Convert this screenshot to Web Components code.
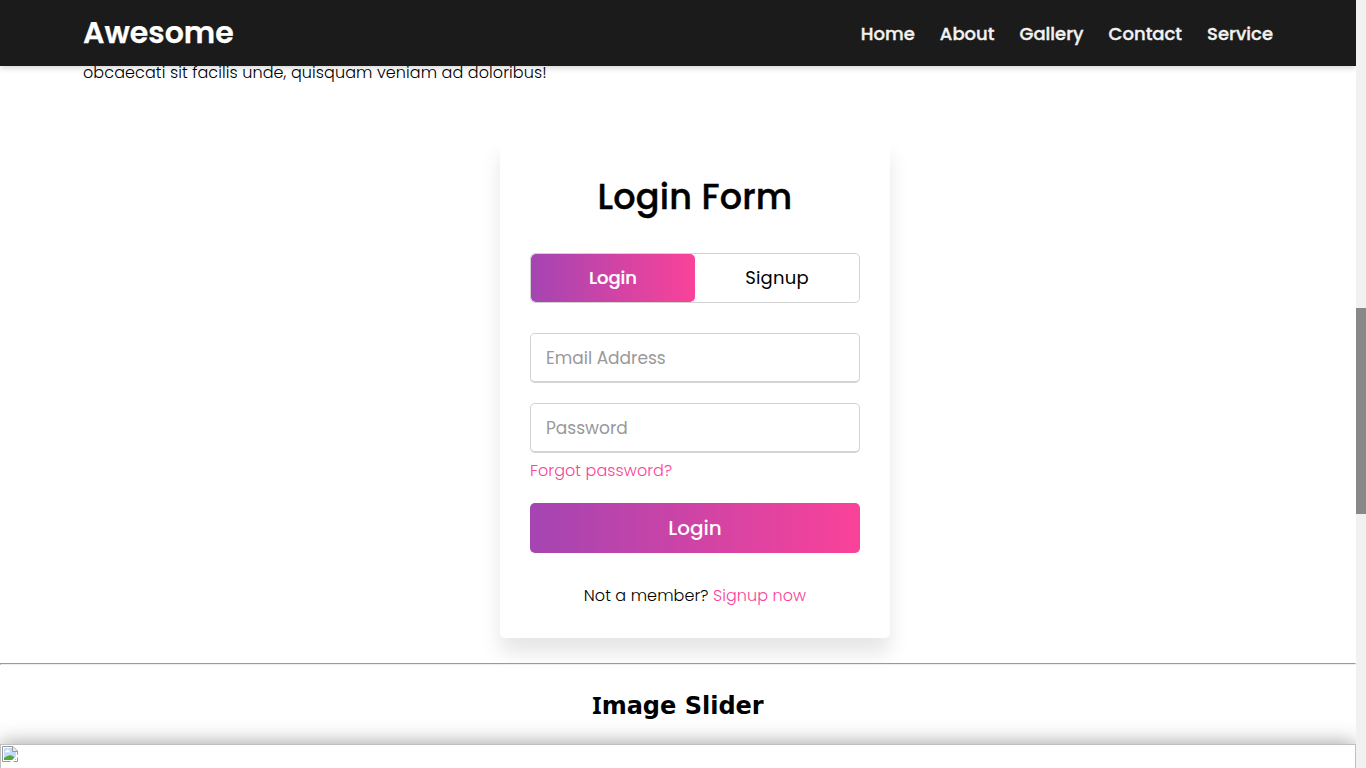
<!DOCTYPE html>
<html lang="en">
<head>
<meta charset="utf-8">
<title>Awesome</title>
<style>
  html, body { margin: 0; height: 100%; overflow: hidden; background: #fff; }
  body { font-family: Poppins, Inter, "Open Sans", sans-serif; color: #000; }
</style>
</head>
<body>
<app-page></app-page>
<script>
const define = (name, html) => {
  const template = document.createElement('template');
  template.innerHTML = html.trim();
  customElements.define(name, class extends HTMLElement {
    constructor() {
      super();
      this.attachShadow({ mode: 'open' }).append(template.content.cloneNode(true));
    }
  });
};

define('site-header', `
  <style>
    :host{display:flex;flex:none;box-sizing:border-box;height:66px;padding:0 83px;align-items:center;justify-content:space-between;
      background:#1b1b1b;color:#fff;box-shadow:0 2px 6px rgba(0,0,0,.17);position:relative;z-index:2}
    .logo{font-size:30px;font-weight:600;line-height:48px;-webkit-text-stroke:.25px}
    nav{display:flex;gap:25px;font-size:18px;font-weight:500;line-height:28px;color:#f2f2f2;padding-top:2px;-webkit-text-stroke:.35px}
  </style>
  <div class="logo">Awesome</div>
  <nav><span>Home</span><span>About</span><span>Gallery</span><span>Contact</span><span>Service</span></nav>`);

define('tab-switch', `
  <style>
    :host{display:flex;box-sizing:border-box;height:50px;margin:30px 0;border:1px solid lightgrey;border-radius:5px;overflow:hidden;
      font-size:18px;font-weight:500;line-height:48px;text-align:center}
    div{flex:1}
    .on{color:#fff;border-radius:5px;background:linear-gradient(to right,#a445b2,#fa4299);-webkit-text-stroke:.2px}
    .off{font-weight:400;letter-spacing:.2px}
  </style>
  <div class="on">Login</div><div class="off">Signup</div>`);

define('text-field', `
  <style>
    :host{display:block;box-sizing:border-box;height:50px;margin-top:20px;padding-left:15px;border:1px solid lightgrey;border-bottom-width:2px;
      border-radius:5px;font-size:17px;font-weight:400;line-height:48px;color:#999}
  </style><slot></slot>`);

define('submit-button', `
  <style>
    :host{display:block;height:50px;margin-top:20px;border-radius:5px;background:linear-gradient(to right,#a445b2,#fa4299);
      color:#fff;font-size:20px;font-weight:500;line-height:50px;text-align:center}
  </style><slot></slot>`);

define('login-card', `
  <style>
    :host{display:block;flex:none;box-sizing:border-box;width:390px;height:498px;padding:30px;border-radius:5px;background:#fff;
      box-shadow:0 15px 20px rgba(0,0,0,.1);font-size:16px;font-weight:300;letter-spacing:.07px}
    .title{height:53px;line-height:53px;font-size:35px;font-weight:500;text-align:center;letter-spacing:.2px;-webkit-text-stroke:.4px}
    .forgot{height:25px;margin-top:5px;line-height:25px}
    .pink{color:#fa4299}
    .join{height:25px;margin-top:30px;line-height:25px;text-align:center}
    tab-switch,text-field,submit-button{letter-spacing:0}
  </style>
  <div class="title">Login Form</div>
  <tab-switch></tab-switch>
  <text-field>Email Address</text-field>
  <text-field>Password</text-field>
  <div class="forgot pink">Forgot password?</div>
  <submit-button>Login</submit-button>
  <div class="join">Not a member? <span class="pink">Signup now</span></div>`);

define('image-slider', `
  <style>
    :host{display:block;flex:none;box-sizing:border-box;height:300px;padding:1px;border:1px solid silver;background:#fff;
      box-shadow:0 0 20px rgba(0,0,0,.4)}
    svg{display:block}
  </style>
  <svg width="16" height="16" viewBox="0 0 16 16">
    <path d="M.5 .5H11L15.5 5V15.5H.5Z" fill="#fff" stroke="#9a9a9a"/>
    <path d="M2 2H10.5V5.5H14V14H2Z" fill="#c3d9fb"/>
    <path d="M3 6.2Q3 4.8 4.3 4.8Q4.8 3.2 6.2 3.6Q7.2 3.8 7.2 5Q8.2 5 8.2 6.2Z" fill="#fff"/>
    <path d="M2 14V12Q5 9.5 7 9.5Q10 8.5 14 13V14Z" fill="#52a936"/>
    <path d="M10.5 .8V5.5H15.2" fill="#e9e9e9" stroke="#9a9a9a"/>
    <path d="M8 16L16 8.3V11L11 16Z" fill="#fff"/>
  </svg>`);

define('page-scrollbar', `
  <style>
    :host{display:block;box-sizing:border-box;height:768px;padding-top:308px;background:#f1f1f1}
    div{height:206px;background:#888}
  </style><div></div>`);

define('app-page', `
  <style>
    :host{display:grid;grid-template-columns:1fr 10px;height:768px;overflow:hidden}
    main{display:flex;flex-direction:column;height:768px;overflow:hidden;min-width:0}
    .copy{flex:none;height:24px;margin:-5px 0 55px;padding-left:83px;font-size:16px;font-weight:300;line-height:24px;letter-spacing:.09px}
    login-card{margin-left:500px}
    hr{flex:none;box-sizing:border-box;width:100%;height:2px;margin:25px 0 0;border:1px solid;border-color:#9a9a9a #eee #eee #9a9a9a;position:relative}
    h2{flex:none;margin:0;height:79px;padding-top:24px;box-sizing:border-box;font:bold 24px/32px Verdana,"DejaVu Sans",sans-serif;text-align:center}
    h2::first-letter{font-family:Verdana,"Noto Sans",sans-serif}
  </style>
  <main>
    <site-header></site-header>
    <div class="copy">obcaecati sit facilis unde, quisquam veniam ad doloribus!</div>
    <login-card></login-card>
    <hr>
    <h2>Image Slider</h2>
    <image-slider></image-slider>
  </main>
  <page-scrollbar></page-scrollbar>`);
</script>
</body>
</html>
